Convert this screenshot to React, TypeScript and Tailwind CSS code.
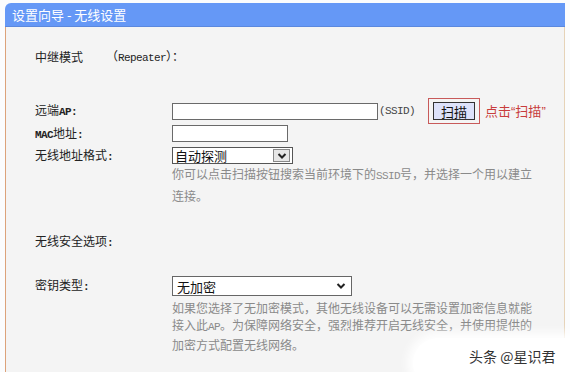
const mono = "font-['Liberation_Mono',monospace] text-[11px] tracking-[-0.6px]";
const lq = "font-['Liberation_Sans',sans-serif]";

function Chevron() {
  return (
    <svg width="10" height="8" viewBox="0 0 10 8">
      <path d="M1.5 2 L5 5.5 L8.5 2" fill="none" stroke="#222" strokeWidth="2" />
    </svg>
  );
}

export default function App() {
  return (
    <div className="relative w-[570px] h-[372px] overflow-hidden bg-[#fbfcfd] pt-[3px] pl-[5px] pr-[5px] font-['Noto_Sans_CJK_SC',sans-serif]">
      <div className="h-[24px] rounded-tl-[6px] bg-[#6598f6] pl-[7px] flex items-center text-[13px] text-white border-b border-[#5b88de]">
        设置向导 - 无线设置
      </div>
      <div className="h-[345px] bg-[#f4f4f4] border-l border-l-[#dca27a] border-r border-r-[#e6d3b8] pl-[29px] pt-[21px] text-[12px] text-[#222]">
        {/* Row 1 */}
        <div className="h-[18px] flex items-center leading-[18px]">
          <span className="w-[71px]">中继模式</span>
          <span>
            （<span className={mono}>Repeater</span>）：
          </span>
        </div>

        {/* 远端AP */}
        <div className="mt-[32px] h-[26px] grid grid-cols-[137px_1fr] items-center">
          <span>
            远端<span className={`${mono} font-bold`}>AP:</span>
          </span>
          <div className="flex items-center">
            <div className="w-[206px] h-[17px] bg-white border border-[#6a6a6a]" />
            <span className={`${mono} w-[50px] pl-[1px] text-[#444]`}>(SSID)</span>
            <div className="w-[52px] h-[26px] border border-[#c85a5a] flex items-center justify-center">
              <div className="w-[42px] h-[18px] border border-[#333] bg-[#dde2fa] flex items-center justify-center text-[13px] leading-none text-[#111]">
                扫描
              </div>
            </div>
            <span className="ml-[5px] text-[13px] text-[#c83c3c] leading-none">
              点击<span className={lq}>“</span>扫描<span className={lq}>”</span>
            </span>
          </div>
        </div>

        {/* MAC */}
        <div className="h-[17px] grid grid-cols-[137px_1fr] items-center">
          <span>
            <span className={`${mono} font-bold`}>MAC</span>地址<span className={`${mono} font-bold`}>:</span>
          </span>
          <div className="w-[116px] h-[17px] bg-white border border-[#6a6a6a]" />
        </div>

        {/* 无线地址格式 */}
        <div className="mt-[5px] h-[17px] grid grid-cols-[137px_1fr] items-center">
          <span>
            无线地址格式<span className={`${mono} font-bold`}>:</span>
          </span>
          <div className="w-[121px] h-[17px] bg-white border border-[#555] flex items-center">
            <span className="flex-1 pl-[2px] text-[13px] leading-none text-[#111]">自动探测</span>
            <div className="w-[17px] h-[13px] mr-[2px] border border-[#888] bg-[#e6e6e6] flex items-center justify-center">
              <Chevron />
            </div>
          </div>
        </div>

        <div className="mt-[1px] pl-[137px] text-[#8a8a8a] leading-[19px]">
          你可以点击扫描按钮搜索当前环境下的<span className={mono}>SSID</span>号，并选择一个用以建立
          <br />
          连接。
        </div>

        <div className="mt-[27px] h-[18px] leading-[18px]">
          无线安全选项<span className={`${mono} font-bold`}>:</span>
        </div>

        {/* 密钥类型 */}
        <div className="mt-[26px] h-[20px] grid grid-cols-[137px_1fr] items-center">
          <span>
            密钥类型<span className={`${mono} font-bold`}>:</span>
          </span>
          <div className="w-[180px] h-[20px] bg-white border border-[#666] flex items-center">
            <span className="flex-1 pl-[4px] text-[13px] leading-none text-[#111]">无加密</span>
            <div className="w-[12px] mr-[4px] flex items-center justify-center">
              <Chevron />
            </div>
          </div>
        </div>

        <div className="mt-[3px] pl-[137px] text-[#8a8a8a] leading-[17px]">
          如果您选择了无加密模式，其他无线设备可以无需设置加密信息就能
          <br />
          接入此<span className={mono}>AP</span>。为保障网络安全，强烈推荐开启无线安全，并使用提供的
          <br />
          加密方式配置无线网络。
        </div>
      </div>

      {/* watermark */}
      <div className="absolute left-[413px] top-[338px] w-[190px] h-[50px] rounded-full bg-white shadow-[0_0_10px_6px_rgba(255,255,255,0.9)] pl-[56px] pt-[8px] text-[14px] leading-[20px] text-[#333]">
        头条 @星识君
      </div>
    </div>
  );
}
